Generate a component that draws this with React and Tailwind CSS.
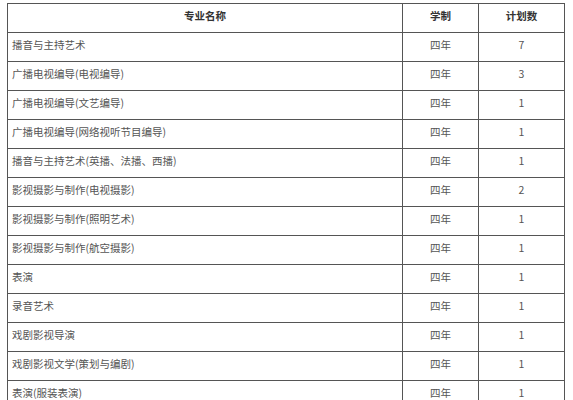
import React from "react";

const rows = [
  ["播音与主持艺术", "四年", "7"],
  ["广播电视编导(电视编导)", "四年", "3"],
  ["广播电视编导(文艺编导)", "四年", "1"],
  ["广播电视编导(网络视听节目编导)", "四年", "1"],
  ["播音与主持艺术(英播、法播、西播)", "四年", "1"],
  ["影视摄影与制作(电视摄影)", "四年", "2"],
  ["影视摄影与制作(照明艺术)", "四年", "1"],
  ["影视摄影与制作(航空摄影)", "四年", "1"],
  ["表演", "四年", "1"],
  ["录音艺术", "四年", "1"],
  ["戏剧影视导演", "四年", "1"],
  ["戏剧影视文学(策划与编剧)", "四年", "1"],
  ["表演(服装表演)", "四年", "1"],
];

export default function App() {
  return (
    <div
      className="w-[573px] h-[400px] overflow-hidden bg-white"
      style={{ fontFamily: '"Noto Sans CJK SC", "Noto Sans", sans-serif' }}
    >
      <div className="ml-[7px] mt-[3px] w-[558px] border-l border-t border-[#555] text-[10.5px] leading-none">
        <div className="flex h-[29px] border-b border-[#555] font-bold text-[#333]">
          <div className="w-[395px] border-r border-[#555] flex items-center justify-center pb-[4px]">专业名称</div>
          <div className="w-[76px] border-r border-[#555] flex items-center justify-center pb-[4px]">学制</div>
          <div className="w-[86px] border-r border-[#555] flex items-center justify-center pb-[4px]">计划数</div>
        </div>
        {rows.map((r, i) => (
          <div key={i} className="flex h-[29px] border-b border-[#555] text-[#555]">
            <div className="w-[395px] border-r border-[#555] flex items-center pl-[4px] pb-[4px]">{r[0]}</div>
            <div className="w-[76px] border-r border-[#555] flex items-center justify-center pb-[4px]">{r[1]}</div>
            <div className="w-[86px] border-r border-[#555] flex items-center justify-center pb-[4px]">{r[2]}</div>
          </div>
        ))}
      </div>
    </div>
  );
}
